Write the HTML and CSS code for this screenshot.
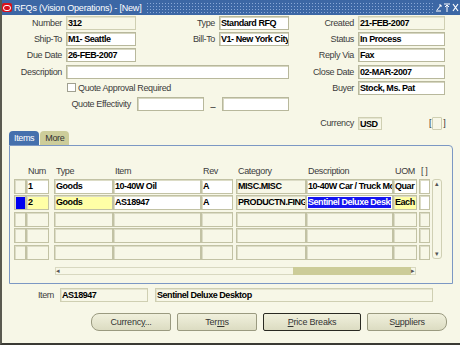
FILE: index.html
```html
<!DOCTYPE html>
<html lang="en">
<head>
<meta charset="utf-8">
<title>RFQs (Vision Operations)</title>
<link rel="stylesheet" href="styles.css">
</head>
<body>
<div class="window">
  <div class="titlebar">
    <span class="logo"><span class="ring"></span></span>
    <span class="title">RFQs (Vision Operations) - [New]</span>
    <span class="dots"></span>
    <span class="controls">
      <svg width="24" height="10" viewBox="0 0 24 10">
        <path d="M1 8h5M2 7l4-5M4 2h2v2" stroke="#fff" stroke-width="1" fill="none"/>
        <path d="M9 1h6M12 2v7M10 4l2-2 2 2" stroke="#fff" stroke-width="1" fill="none"/>
        <path d="M18 1l5 7M23 1l-5 7" stroke="#fff" stroke-width="1.2" fill="none"/>
      </svg>
    </span>
  </div>

  <div class="content">
    <div class="head">
      <span class="lbl">Number</span><div class="fld ro">312</div>
      <span class="lbl">Type</span><div class="fld">Standard RFQ</div>
      <span class="lbl">Created</span><div class="fld ro">21-FEB-2007</div>

      <span class="lbl">Ship-To</span><div class="fld">M1- Seattle</div>
      <span class="lbl">Bill-To</span><div class="fld">V1- New York City</div>
      <span class="lbl">Status</span><div class="fld">In Process</div>

      <span class="lbl">Due Date</span><div class="fld">26-FEB-2007</div>
      <span></span><span></span>
      <span class="lbl">Reply Via</span><div class="fld">Fax</div>

      <span class="lbl">Description</span><div class="fld wide"></div>
      <span class="lbl">Close Date</span><div class="fld">02-MAR-2007</div>

      <span></span>
      <div class="check"><span class="box"></span>Quote Approval Required</div>
      <span class="lbl">Buyer</span><div class="fld">Stock, Ms. Pat</div>

      <div class="effect">
        <span class="lbl">Quote Effectivity</span>
        <div class="fld"></div>
        <span class="dash">_</span>
        <div class="fld"></div>
      </div>
    </div>

    <div class="currency">
      <span class="lbl">Currency</span>
      <div class="fld ro small">USD</div>
      <span class="brk">[<span class="mini"></span>]</span>
    </div>

    <div class="tabs">
      <span class="tab on">Items</span>
      <span class="tab">More</span>
    </div>

    <div class="panel">
      <div class="hdr">
        <span class="c-sel"></span>
        <span class="c-num">Num</span>
        <span class="c-type">Type</span>
        <span class="c-item">Item</span>
        <span class="c-rev">Rev</span>
        <span class="c-cat">Category</span>
        <span class="c-desc">Description</span>
        <span class="c-uom">UOM</span>
        <span class="c-x">[ ]</span>
      </div>
      <div class="grid">
        <div class="rows">
          <div class="row">
            <span class="cell c-sel"></span>
            <span class="cell c-num w">1</span>
            <span class="cell c-type w">Goods</span>
            <span class="cell c-item w">10-40W Oil</span>
            <span class="cell c-rev w">A</span>
            <span class="cell c-cat">MISC.MISC</span>
            <span class="cell c-desc w">10-40W Car / Truck Mo</span>
            <span class="cell c-uom w">Quar</span>
            <span class="cell c-x w"></span>
          </div>
          <div class="row">
            <span class="cell c-sel cur"></span>
            <span class="cell c-num y">2</span>
            <span class="cell c-type y">Goods</span>
            <span class="cell c-item w">AS18947</span>
            <span class="cell c-rev w">A</span>
            <span class="cell c-cat">PRODUCTN.FING</span>
            <span class="cell c-desc sel">Sentinel Deluxe Deskt</span>
            <span class="cell c-uom y">Each</span>
            <span class="cell c-x w"></span>
          </div>
          <div class="row">
            <span class="cell c-sel"></span><span class="cell c-num"></span><span class="cell c-type"></span><span class="cell c-item"></span><span class="cell c-rev"></span><span class="cell c-cat"></span><span class="cell c-desc"></span><span class="cell c-uom"></span><span class="cell c-x"></span>
          </div>
          <div class="row">
            <span class="cell c-sel"></span><span class="cell c-num"></span><span class="cell c-type"></span><span class="cell c-item"></span><span class="cell c-rev"></span><span class="cell c-cat"></span><span class="cell c-desc"></span><span class="cell c-uom"></span><span class="cell c-x"></span>
          </div>
          <div class="row">
            <span class="cell c-sel"></span><span class="cell c-num"></span><span class="cell c-type"></span><span class="cell c-item"></span><span class="cell c-rev"></span><span class="cell c-cat"></span><span class="cell c-desc"></span><span class="cell c-uom"></span><span class="cell c-x"></span>
          </div>
        </div>
        <div class="vscroll">
          <span class="arr">&#9652;</span>
          <span class="track"></span>
          <span class="arr">&#9662;</span>
        </div>
      </div>
      <div class="hscroll">
        <span class="arr">&#9666;</span>
        <span class="htrack"></span>
        <span class="thumb"></span>
        <span class="arr">&#9656;</span>
      </div>
    </div>

    <div class="itemrow">
      <span class="lbl">Item</span>
      <div class="fld ro item">AS18947</div>
      <div class="fld ro itemdesc">Sentinel Deluxe Desktop</div>
    </div>

    <div class="buttons">
      <button class="btn first">Currenc<u>y</u>...</button>
      <button class="btn">Ter<u>m</u>s</button>
      <button class="btn dflt"><u>P</u>rice Breaks</button>
      <button class="btn last">S<u>u</u>ppliers</button>
    </div>
  </div>
</div>
</body>
</html>
```

FILE: styles.css
```css
body {
  margin: 0;
  font-family: "Liberation Sans", Arial, sans-serif;
  font-size: 9px;
  letter-spacing: -0.35px;
  color: #000;
}

.window {
  width: 460px;
  height: 345px;
  box-sizing: border-box;
  background-color: #f7f7e7;
  border-left: 2px solid #5a5a50;
  border-bottom: 2px solid #3a3a34;
  overflow: hidden;
}

/* title bar */
.titlebar {
  height: 15px;
  margin-left: -2px;
  display: flex;
  align-items: center;
  background-color: #3c67a5;
}

.logo {
  width: 10px;
  height: 9px;
  margin: 0 2px 0 2px;
  background-color: #d8121b;
  border-radius: 2px;
  display: flex;
  align-items: center;
  justify-content: center;
}

.ring {
  width: 6px;
  height: 4px;
  border: 1px solid #fff;
  border-radius: 3px;
}

.title {
  color: #fff;
  padding-right: 5px;
  white-space: nowrap;
  letter-spacing: -0.2px;
}

.dots {
  flex: 1;
  height: 11px;
  background-image: radial-gradient(circle, #8aa8d6 0.7px, transparent 0.9px);
  background-size: 3px 3px;
}

.controls {
  width: 26px;
  display: flex;
  justify-content: center;
}

/* header fields */
.content {
  padding-top: 1px;
}

.head {
  display: grid;
  grid-template-columns: 62px 70px 75px 70px 61px 87px;
  grid-auto-rows: 14px;
  column-gap: 4px;
  row-gap: 2.2px;
  margin-left: -2px;
}

.lbl {
  color: #3c3c3c;
  text-align: right;
  line-height: 14px;
  white-space: nowrap;
}

.fld {
  box-sizing: border-box;
  height: 14px;
  background-color: #fff;
  border: 1px solid #b8b89c;
  box-shadow: inset 1px 1px 0 #d6d6c0;
  font-weight: bold;
  letter-spacing: -0.45px;
  line-height: 12px;
  padding-left: 1px;
  white-space: nowrap;
  overflow: hidden;
}

.fld.ro {
  background-color: #f7f7e7;
  border-color: #cfcfb2;
  box-shadow: inset 1px 1px 0 #e4e4cf;
}

.fld.wide {
  grid-column: 2 / 5;
}

.check {
  grid-column: 2 / 5;
  display: flex;
  align-items: center;
  color: #3c3c3c;
  line-height: 14px;
}

.box {
  width: 7px;
  height: 7px;
  margin: 0 2px 0 1px;
  border: 1px solid #a0a090;
  background-color: #fff;
}

.effect {
  grid-column: 1 / 5;
  display: flex;
}

.effect .lbl {
  width: 137px;
  margin-right: 6px;
}

.effect .fld {
  width: 70px;
}

.dash {
  width: 19px;
  text-align: center;
  line-height: 12px;
}

/* currency line */
.currency {
  display: flex;
  align-items: center;
  margin-top: 6px;
  height: 13px;
}

.currency .lbl {
  width: 352px;
  margin-right: 4px;
}

.fld.small {
  width: 24px;
  height: 13px;
  padding-left: 1px;
}

.brk {
  margin-left: 47px;
  display: flex;
  align-items: center;
  gap: 1px;
  color: #333;
}

.mini {
  width: 8px;
  height: 11px;
  border: 1px solid #cfcfb2;
  border-radius: 1px;
}

/* tabs */
.tabs {
  display: flex;
  margin: 1px 0 0 7px;
  height: 14px;
}

.tab {
  padding: 0 5px;
  line-height: 15px;
  border-radius: 4px 4px 0 0;
  background-color: #cdcd9a;
  color: #333;
  margin-right: 1px;
}

.tab.on {
  background-color: #4570ad;
  color: #fff;
}

.panel {
  margin-left: 7px;
  width: 444px;
  height: 139px;
  box-sizing: border-box;
  border: 1px solid #7c98c4;
  border-radius: 0 4px 0 0;
  padding: 19px 0 0 4px;
}

.hdr,
.row {
  display: flex;
}

.hdr {
  height: 12px;
  margin-bottom: 2px;
  color: #3c3c3c;
  line-height: 12px;
}

.hdr span {
  padding-left: 2px;
  box-sizing: border-box;
}

.c-sel { width: 12px; }
.c-num { width: 23px; margin-right: 5px; }
.c-type { width: 59px; }
.c-item { width: 88px; }
.c-rev { width: 32px; margin-right: 3px; }
.c-cat { width: 70px; }
.c-desc { width: 87px; }
.c-uom { width: 24px; margin-right: 2px; }
.c-x { width: 11px; }

.grid {
  display: flex;
}

.rows {
  display: flex;
  flex-direction: column;
  gap: 1.5px;
}

.row {
  height: 15px;
}

.cell {
  box-sizing: border-box;
  height: 15px;
  border: 1px solid #c2c2a4;
  box-shadow: inset 1px 1px 0 #dcdcc6;
  background-color: #f7f7e7;
  font-weight: bold;
  letter-spacing: -0.45px;
  line-height: 13px;
  padding-left: 1px;
  white-space: nowrap;
  overflow: hidden;
}

.cell.w {
  background-color: #fff;
}

.cell.y {
  background-color: #ffffa6;
}

.cell.cur {
  background-color: #0000f0;
}

.cell.sel {
  background-color: #1414f0;
  box-shadow: inset 1px 1px 0 #fff, inset -1px -1px 0 #fff;
  color: #fff;
}

.vscroll {
  width: 10px;
  height: 80px;
  margin-left: 2px;
  box-sizing: border-box;
  border: 1px solid #d0d0b4;
  border-radius: 3px;
  display: flex;
  flex-direction: column;
  align-items: center;
  color: #555;
  font-size: 7px;
}

.vscroll .track {
  flex: 1;
}

.hscroll {
  display: flex;
  align-items: center;
  margin: 7px 0 0 41px;
  width: 361px;
  height: 8px;
  box-sizing: border-box;
  border: 1px solid #d8d8c0;
  color: #555;
  font-size: 7px;
  line-height: 7px;
}

.htrack {
  flex: 1;
}

.thumb {
  width: 118px;
  height: 8px;
  background-color: #cccc98;
}

/* item line */
.itemrow {
  display: flex;
  align-items: center;
  margin-top: 4px;
  height: 14px;
}

.itemrow .lbl {
  width: 52px;
  margin-right: 6px;
}

.fld.item {
  width: 88px;
  margin-right: 7px;
}

.fld.itemdesc {
  width: 278px;
}

/* buttons */
.buttons {
  display: flex;
  margin: 11px 0 0 89px;
  gap: 6px;
}

.btn {
  height: 18px;
  padding: 0;
  font-family: "Liberation Sans", Arial, sans-serif;
  font-size: 9px;
  letter-spacing: -0.2px;
  color: #333;
  background: linear-gradient(#f0f0dc, #dcdcc2);
  border: 1px solid #9a9a80;
  border-radius: 2px;
  width: 80px;
}

.btn.first {
  border-radius: 8px 2px 2px 8px;
}

.btn.last {
  border-radius: 2px 8px 8px 2px;
}

.btn.dflt {
  width: 98px;
  border-color: #2a2a22;
}
```
